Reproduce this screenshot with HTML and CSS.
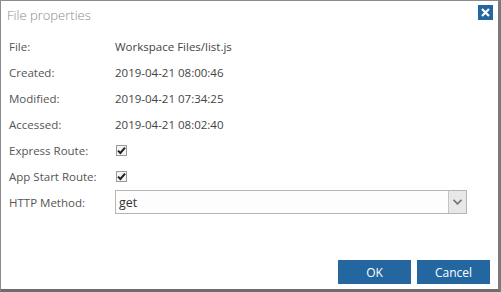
FILE: index.html
```html
<!DOCTYPE html>
<html lang="en">
<head>
    <meta charset="UTF-8">
    <title>File properties</title>
    <link rel="stylesheet" href="styles.css">
</head>
<body>

    <div class="dialog">
        <!-- Title bar -->
        <div class="dialog-header">
            <span class="dialog-title">File properties</span>
            <button class="close-button" aria-label="Close">
                <svg width="9" height="9" viewBox="0 0 9 9">
                    <path d="M1 1 L8 8 M8 1 L1 8" stroke="#fff" stroke-width="2.2"/>
                </svg>
            </button>
        </div>

        <!-- Properties -->
        <div class="props">
            <div class="prop-label">File:</div>
            <div class="prop-value">Workspace Files/list.js</div>

            <div class="prop-label">Created:</div>
            <div class="prop-value">2019-04-21 08:00:46</div>

            <div class="prop-label">Modified:</div>
            <div class="prop-value">2019-04-21 07:34:25</div>

            <div class="prop-label">Accessed:</div>
            <div class="prop-value">2019-04-21 08:02:40</div>

            <div class="prop-label">Express Route:</div>
            <div class="prop-value"><span class="check"><svg width="9" height="9" viewBox="0 0 9 9"><path d="M1 4.6 L3.4 7 L8 1.6" fill="none" stroke="#222" stroke-width="2"/></svg></span></div>

            <div class="prop-label">App Start Route:</div>
            <div class="prop-value"><span class="check"><svg width="9" height="9" viewBox="0 0 9 9"><path d="M1 4.6 L3.4 7 L8 1.6" fill="none" stroke="#222" stroke-width="2"/></svg></span></div>

            <div class="prop-label">HTTP Method:</div>
            <div class="prop-value">
                <div class="select">
                    <span class="select-text">get</span>
                    <span class="select-arrow">
                        <svg width="9" height="6" viewBox="0 0 9 6"><path d="M0.5 0.8 L4.5 4.8 L8.5 0.8" fill="none" stroke="#777" stroke-width="1.8"/></svg>
                    </span>
                </div>
            </div>
        </div>

        <!-- Buttons -->
        <div class="dialog-footer">
            <button class="btn">OK</button>
            <button class="btn">Cancel</button>
        </div>
    </div>

</body>
</html>
```

FILE: styles.css
```css
* {
    margin: 0;
    padding: 0;
    box-sizing: border-box;
    font-family: "Open Sans", "Noto Sans", sans-serif;
}

body {
    width: 501px;
    height: 292px;
    background: #ffffff;
    overflow: hidden;
}

.dialog {
    width: 501px;
    height: 292px;
    display: flex;
    flex-direction: column;
    border-left: 1px solid #8c8c8c;
    border-top: 1px solid #8c8c8c;
    border-right: 3px solid #7a7a7a;
    border-bottom: 3px solid #6e6e6e;
    background: #ffffff;
}

.dialog-header {
    height: 32px;
    display: flex;
    justify-content: space-between;
    align-items: flex-start;
    padding: 4px 4px 0 6px;
}

.dialog-title {
    font-size: 13px;
    font-weight: 300;
    color: #8a8a8a;
    line-height: 20px;
}

.close-button {
    width: 15px;
    height: 15px;
    margin-right: 1px;
    border: none;
    background: #2467a0;
    display: flex;
    justify-content: center;
    align-items: center;
}

.props {
    display: grid;
    grid-template-columns: 106px 352px;
    grid-auto-rows: 26px;
    padding-left: 8px;
    font-size: 11.5px;
}

.prop-label {
    display: flex;
    align-items: center;
    color: #555555;
}

.prop-value {
    display: flex;
    align-items: center;
    color: #444444;
}

.check {
    width: 11px;
    height: 11px;
    margin-left: 1px;
    border: 1px solid #9a9a9a;
    background: #f4f4f4;
    display: flex;
    justify-content: center;
    align-items: center;
}

.select {
    width: 352px;
    height: 24px;
    display: flex;
    align-items: stretch;
    border: 1px solid #b5b5b5;
    background: #fdfdfd;
}

.select-text {
    flex: 1;
    display: flex;
    align-items: center;
    padding-left: 3px;
    font-size: 12.5px;
    color: #333333;
}

.select-arrow {
    width: 18px;
    display: flex;
    justify-content: center;
    align-items: center;
    border-left: 1px solid #c4c4c4;
    background: #e8e8e8;
}

.dialog-footer {
    margin-top: auto;
    display: flex;
    justify-content: flex-end;
    gap: 6px;
    padding: 0 8px 5px 0;
}

.btn {
    width: 73px;
    height: 24px;
    border: none;
    background: #2467a0;
    color: #ffffff;
    font-size: 12px;
}
```
